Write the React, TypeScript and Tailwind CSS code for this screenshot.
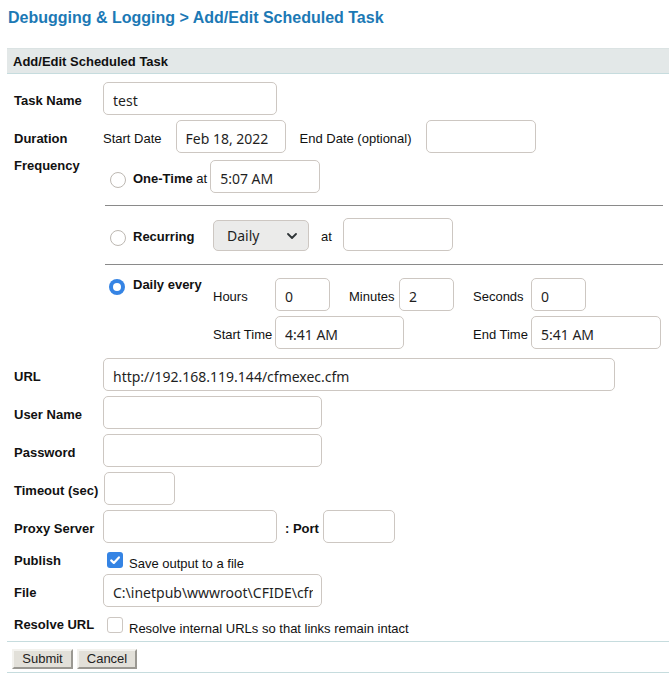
import React from "react";

const label = "font-['Liberation_Sans',Arial,sans-serif] text-[13px] leading-[15px] text-[#111]";
const field =
  "h-[33px] rounded-[5px] border border-[#cdc7c2] bg-white pl-[9px] pr-[8px] pt-[3px] font-['Noto_Sans',sans-serif] text-[14px] text-[#1f1f1f] outline-none";

function Field({ w, value = "" }: { w: string; value?: string }) {
  return <input readOnly value={value} className={`${field} ${w} shrink-0`} />;
}

function Radio({ checked = false }: { checked?: boolean }) {
  if (checked) {
    return (
      <span className="grid h-4 w-4 shrink-0 place-items-center rounded-full bg-[#3584e4]">
        <span className="block h-2 w-2 rounded-full bg-white" />
      </span>
    );
  }
  return <span className="block h-4 w-4 shrink-0 rounded-full border border-[#bdb8b2] bg-white" />;
}

function Check({ checked = false }: { checked?: boolean }) {
  if (checked) {
    return (
      <span className="grid h-4 w-4 shrink-0 place-items-center rounded-[3px] bg-[#3584e4]">
        <svg viewBox="0 0 16 16" className="h-4 w-4" fill="none" stroke="white" strokeWidth="2.2" strokeLinecap="round" strokeLinejoin="round">
          <path d="M4.2 8.4l2.6 2.5L11.9 5.4" />
        </svg>
      </span>
    );
  }
  return <span className="block h-4 w-4 shrink-0 rounded-[3px] border border-[#cdc7c2] bg-white" />;
}

function Row({ name, children, className = "" }: { name: string; children: React.ReactNode; className?: string }) {
  return (
    <div className={`flex items-center ${className}`}>
      <span className={`${label} w-[89px] shrink-0 pt-[4px] font-bold`}>{name}</span>
      {children}
    </div>
  );
}

export default function App() {
  return (
    <div className="h-[679px] w-[669px] overflow-hidden bg-white">
      <h1 className="pl-[8px] pt-[8px] font-['Liberation_Sans',Arial,sans-serif] text-[16px] font-bold leading-[20px] text-[#1c79b5]">
        Debugging &amp; Logging &gt; Add/Edit Scheduled Task
      </h1>

      <div className="ml-[7px] mt-[20px] w-[700px]">
        <div className="flex h-[26px] items-center border-t border-b border-t-[#dbe3e3] border-b-[#c6dcde] bg-[#e3e8e8] pl-[6px] pt-[1px]">
          <span className={`${label} font-bold`}>Add/Edit Scheduled Task</span>
        </div>

        <div className="flex flex-col pl-[7px]">
          <Row name="Task Name" className="mt-[8px]">
            <Field w="w-[174px]" value="test" />
          </Row>

          <Row name="Duration" className="mt-[5px]">
            <span className={`${label} pt-[4px]`}>Start Date</span>
            <span className="ml-[14px]">
              <Field w="w-[110px]" value="Feb 18, 2022" />
            </span>
            <span className={`${label} ml-[14px] pt-[4px]`}>End Date (optional)</span>
            <span className="ml-[14px]">
              <Field w="w-[110px]" />
            </span>
          </Row>

          {/* frequency block */}
          <div className="mt-[5px] flex items-start">
            <span className={`${label} w-[89px] shrink-0 font-bold`}>Frequency</span>
            <div className="flex w-[560px] flex-col">
              <div className="mt-[2px] flex h-[33px] items-center">
                <span className="ml-[7px] mt-[6px]">
                  <Radio />
                </span>
                <span className={`${label} ml-[7px] pt-[3px]`}>
                  <b>One-Time</b> at
                </span>
                <span className="ml-[3px]">
                  <Field w="w-[110px]" value="5:07 AM" />
                </span>
              </div>

              <div className="ml-[2px] mt-[12px] border-t border-[#8a8a8a]" />

              <div className="mt-[12px] flex h-[33px] items-center">
                <span className="ml-[7px] mt-[6px]">
                  <Radio />
                </span>
                <span className={`${label} ml-[7px] w-[80px] pt-[3px] font-bold`}>Recurring</span>
                <div className="mt-[2px] flex h-[31px] w-[96px] items-center justify-between rounded-[5px] border border-[#cdc7c2] bg-[#ebebea] pl-[13px] pr-[11px] font-['Noto_Sans',sans-serif] text-[14px] text-[#1f1f1f]">
                  <span>Daily</span>
                  <svg viewBox="0 0 10 6" className="h-[6px] w-[10px]" fill="none" stroke="#2e3436" strokeWidth="1.8" strokeLinecap="round" strokeLinejoin="round">
                    <path d="M1 1l4 4 4-4" />
                  </svg>
                </div>
                <span className={`${label} ml-[12px] pt-[4px]`}>at</span>
                <span className="ml-[11px]">
                  <Field w="w-[110px]" />
                </span>
              </div>

              <div className="ml-[2px] mt-[13px] border-t border-[#8a8a8a]" />

              <div className="mt-[13px] flex items-start">
                <div className="flex w-[110px] shrink-0 items-start">
                  <span className="ml-[6px] mt-[1px]">
                    <Radio checked />
                  </span>
                  <span className={`${label} -mt-[1px] ml-[8px] font-bold`}>Daily every</span>
                </div>
                <div className="flex flex-col">
                  <div className="flex items-center">
                    <span className={`${label} w-[62px] pt-[4px]`}>Hours</span>
                    <Field w="w-[55px]" value="0" />
                    <span className={`${label} ml-[19px] w-[50px] pt-[4px]`}>Minutes</span>
                    <Field w="w-[55px]" value="2" />
                    <span className={`${label} ml-[19px] w-[58px] pt-[4px]`}>Seconds</span>
                    <Field w="w-[55px]" value="0" />
                  </div>
                  <div className="mt-[5px] flex items-center">
                    <span className={`${label} w-[62px] pt-[4px]`}>Start Time</span>
                    <Field w="w-[129px]" value="4:41 AM" />
                    <span className={`${label} ml-[69px] w-[58px] pt-[4px]`}>End Time</span>
                    <Field w="w-[130px]" value="5:41 AM" />
                  </div>
                </div>
              </div>
            </div>
          </div>

          <Row name="URL" className="mt-[9px]">
            <Field w="w-[512px]" value="http://192.168.119.144/cfmexec.cfm" />
          </Row>
          <Row name="User Name" className="mt-[5px]">
            <Field w="w-[219px]" />
          </Row>
          <Row name="Password" className="mt-[5px]">
            <Field w="w-[219px]" />
          </Row>
          <Row name="Timeout (sec)" className="mt-[5px]">
            <span className="ml-[1px]">
              <Field w="w-[71px]" />
            </span>
          </Row>
          <Row name="Proxy Server" className="mt-[5px]">
            <Field w="w-[174px]" />
            <span className={`${label} ml-[8px] pt-[4px] font-bold`}>: Port</span>
            <span className="ml-[4px]">
              <Field w="w-[72px]" />
            </span>
          </Row>

          <div className="mt-[8px] flex items-start">
            <span className={`${label} w-[89px] shrink-0 pt-[2px] font-bold`}>Publish</span>
            <span className="ml-[4px] mt-[1px]">
              <Check checked />
            </span>
            <span className={`${label} ml-[6px] pt-[5px]`}>Save output to a file</span>
          </div>

          <Row name="File" className="mt-[3px]">
            <Field w="w-[219px]" value="C:\inetpub\wwwroot\CFIDE\cfmexec.log" />
          </Row>

          <div className="mt-[8px] flex items-start">
            <span className={`${label} w-[89px] shrink-0 pt-[2px] font-bold`}>Resolve URL</span>
            <span className="ml-[4px] mt-[2px]">
              <Check />
            </span>
            <span className={`${label} ml-[6px] pt-[6px]`}>Resolve internal URLs so that links remain intact</span>
          </div>
        </div>

        <div className="mt-[5px] flex gap-[4px] border-t border-b border-[#c6dcde] pb-[3px] pl-[5px] pt-[7px]">
          <button className="h-[20px] w-[61px] border-2 border-t-[#f3f2ee] border-l-[#f3f2ee] border-r-[#9a9892] border-b-[#9a9892] bg-[#e2e0d9] font-['Liberation_Sans',Arial,sans-serif] text-[13px] leading-[14px] text-[#222]">
            Submit
          </button>
          <button className="h-[20px] w-[60px] border-2 border-t-[#f3f2ee] border-l-[#f3f2ee] border-r-[#9a9892] border-b-[#9a9892] bg-[#e2e0d9] font-['Liberation_Sans',Arial,sans-serif] text-[13px] leading-[14px] text-[#222]">
            Cancel
          </button>
        </div>
      </div>
    </div>
  );
}
